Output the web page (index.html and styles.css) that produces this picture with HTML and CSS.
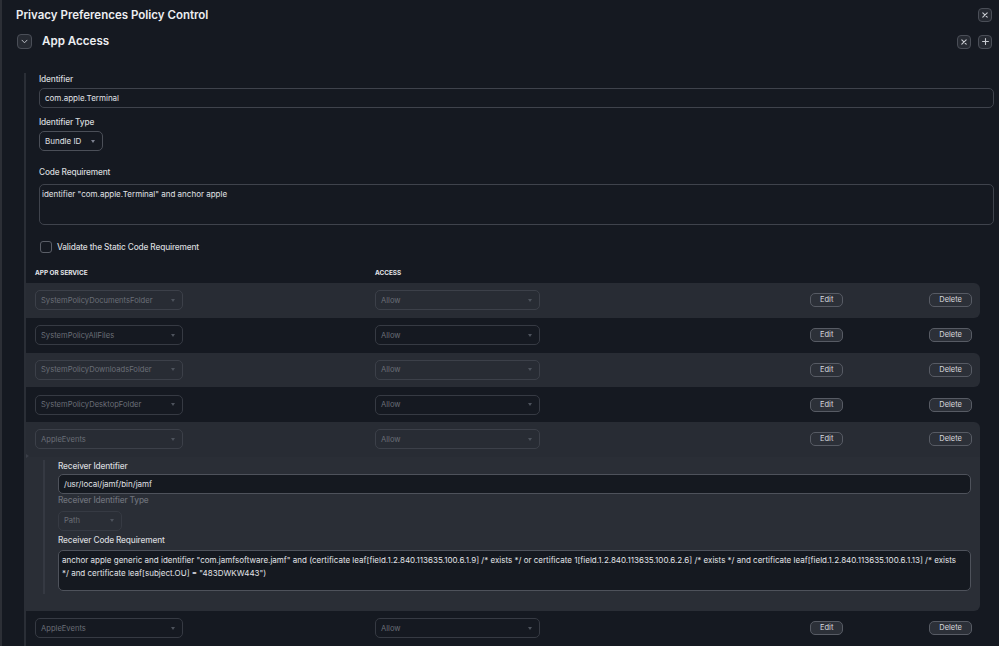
FILE: index.html
```html
<!DOCTYPE html>
<html lang="en">
<head>
<meta charset="utf-8">
<title>Privacy Preferences Policy Control</title>
<link rel="stylesheet" href="styles.css">
</head>
<body>
<header class="top">
  <h1 class="title">Privacy Preferences Policy Control</h1>
  <button class="icon-btn" aria-label="Close">
    <svg width="6" height="6" viewBox="0 0 6 6"><path d="M0.8 0.8L5.2 5.2M5.2 0.8L0.8 5.2" stroke="#c9ccd2" stroke-width="1.1" stroke-linecap="round"/></svg>
  </button>
</header>

<div class="section-head">
  <button class="icon-btn chev" aria-label="Collapse">
    <svg width="7" height="5" viewBox="0 0 7 5"><path d="M1 1.2L3.5 3.8L6 1.2" fill="none" stroke="#b9bcc3" stroke-width="1" stroke-linecap="round" stroke-linejoin="round"/></svg>
  </button>
  <h2 class="section-title">App Access</h2>
  <div class="actions">
    <button class="icon-btn" aria-label="Remove">
      <svg width="6" height="6" viewBox="0 0 6 6"><path d="M0.8 0.8L5.2 5.2M5.2 0.8L0.8 5.2" stroke="#c9ccd2" stroke-width="1.1" stroke-linecap="round"/></svg>
    </button>
    <button class="icon-btn" aria-label="Add">
      <svg width="7" height="7" viewBox="0 0 7 7"><path d="M3.5 0.6V6.4M0.6 3.5H6.4" stroke="#c9ccd2" stroke-width="1.1" stroke-linecap="round"/></svg>
    </button>
  </div>
</div>

<div class="group">
  <div class="field">
    <div class="label">Identifier</div>
    <div class="input">com.apple.Terminal</div>
  </div>
  <div class="field">
    <div class="label">Identifier Type</div>
    <div class="select select-sm"><span>Bundle ID</span><i class="caret"></i></div>
  </div>
  <div class="field field-code">
    <div class="label">Code Requirement</div>
    <div class="textarea">identifier "com.apple.Terminal" and anchor apple</div>
  </div>
  <label class="check"><span class="box"></span><span>Validate the Static Code Requirement</span></label>

  <div class="table">
    <div class="thead"><span>APP OR SERVICE</span><span>ACCESS</span></div>

    <div class="row shade">
      <div class="select select-app dis"><span>SystemPolicyDocumentsFolder</span><i class="caret"></i></div>
      <div class="select select-acc dis"><span>Allow</span><i class="caret"></i></div>
      <button class="btn">Edit</button>
      <button class="btn">Delete</button>
    </div>
    <div class="row">
      <div class="select select-app dis"><span>SystemPolicyAllFiles</span><i class="caret"></i></div>
      <div class="select select-acc dis"><span>Allow</span><i class="caret"></i></div>
      <button class="btn">Edit</button>
      <button class="btn">Delete</button>
    </div>
    <div class="row shade">
      <div class="select select-app dis"><span>SystemPolicyDownloadsFolder</span><i class="caret"></i></div>
      <div class="select select-acc dis"><span>Allow</span><i class="caret"></i></div>
      <button class="btn">Edit</button>
      <button class="btn">Delete</button>
    </div>
    <div class="row">
      <div class="select select-app dis"><span>SystemPolicyDesktopFolder</span><i class="caret"></i></div>
      <div class="select select-acc dis"><span>Allow</span><i class="caret"></i></div>
      <button class="btn">Edit</button>
      <button class="btn">Delete</button>
    </div>
    <div class="row shade open">
      <div class="select select-app dis"><span>AppleEvents</span><i class="caret"></i></div>
      <div class="select select-acc dis"><span>Allow</span><i class="caret"></i></div>
      <button class="btn">Edit</button>
      <button class="btn">Delete</button>
    </div>
    <div class="detail">
      <div class="detail-body">
        <div class="label">Receiver Identifier</div>
        <div class="input input-dark">/usr/local/jamf/bin/jamf</div>
        <div class="label muted">Receiver Identifier Type</div>
        <div class="select select-sm dis"><span>Path</span><i class="caret"></i></div>
        <div class="label">Receiver Code Requirement</div>
        <div class="textarea textarea-dark textarea-nowrap">anchor apple generic and identifier "com.jamfsoftware.jamf" and (certificate leaf[field.1.2.840.113635.100.6.1.9] /* exists */ or certificate 1[field.1.2.840.113635.100.6.2.6] /* exists */ and certificate leaf[field.1.2.840.113635.100.6.1.13] /* exists<br>*/ and certificate leaf[subject.OU] = "483DWKW443")</div>
      </div>
    </div>
    <div class="row">
      <div class="select select-app dis"><span>AppleEvents</span><i class="caret"></i></div>
      <div class="select select-acc dis"><span>Allow</span><i class="caret"></i></div>
      <button class="btn">Edit</button>
      <button class="btn">Delete</button>
    </div>
  </div>
</div>
</body>
</html>
```

FILE: styles.css
```css
* {
  box-sizing: border-box;
  margin: 0;
  padding: 0;
}

html {
  background: #151921;
}

body {
  height: 646px;
  overflow: hidden;
  background: #151921;
  border-left: 2px solid #2c2f36;
  font-family: Inter, "Noto Sans", sans-serif;
  color: #d6d8dc;
}

button {
  font-family: inherit;
  cursor: pointer;
}

/* header */
.top {
  display: flex;
  align-items: center;
  justify-content: space-between;
  padding: 8px 7px 0 14px;
}

.title {
  font-size: 11.5px;
  line-height: 14px;
  font-weight: 600;
  color: #eceef1;
}

.icon-btn {
  width: 14px;
  height: 14px;
  border: 1px solid #4a4e57;
  border-radius: 4px;
  background: #262a32;
  display: flex;
  align-items: center;
  justify-content: center;
}

.section-head {
  display: flex;
  align-items: center;
  margin-top: 12px;
  padding: 0 7px 0 15px;
  height: 15px;
}

.chev {
  width: 15px;
  height: 15px;
}

.section-title {
  flex: 1;
  margin-left: 10px;
  font-size: 11.6px;
  line-height: 15px;
  font-weight: 600;
  color: #eceef1;
}

.actions {
  display: flex;
  gap: 7px;
}

/* group */
.group {
  margin: 24px 0 0 22px;
  border-left: 2px solid #2a2e36;
  padding: 0 5px 0 13px;
}

.label {
  font-size: 8.3px;
  font-weight: 500;
  letter-spacing: -0.15px;
  line-height: 12px;
  color: #d6d8dc;
  margin-bottom: 3px;
}

.label.muted {
  color: #6d717a;
}

.field {
  margin-bottom: 8px;
}

.field-code {
  margin-top: 15px;
}

.field-code .label {
  margin-bottom: 6px;
}

.input {
  height: 20px;
  border: 1px solid #3f434c;
  border-radius: 5px;
  padding: 0 5px;
  font-size: 8px;
  line-height: 18px;
  color: #e0e2e6;
}

.select {
  height: 20px;
  border: 1px solid #4b4f58;
  border-radius: 5px;
  padding: 0 7px 0 5px;
  display: flex;
  align-items: center;
  justify-content: space-between;
  font-size: 8px;
  color: #e0e2e6;
}

.select-sm {
  width: 64px;
}

.caret {
  width: 0;
  height: 0;
  border-left: 2.5px solid transparent;
  border-right: 2.5px solid transparent;
  border-top: 3px solid #7d8290;
}

.select.dis {
  border-color: #363a43;
  color: #6a6e77;
  font-size: 7.6px;
}

.select.dis .caret {
  border-top-color: #4d525c;
}

.textarea {
  height: 41px;
  border: 1px solid #3f434c;
  border-radius: 5px;
  padding: 3px 1px 3px 2px;
  font-size: 8px;
  line-height: 13.5px;
  color: #e0e2e6;
}

.textarea-nowrap {
  white-space: nowrap;
  padding-left: 3px;
}

.check {
  display: flex;
  align-items: center;
  gap: 5px;
  margin: 16px 0 0 1px;
  font-size: 8.3px;
  font-weight: 500;
  letter-spacing: -0.15px;
  line-height: 12px;
  color: #d6d8dc;
}

.box {
  width: 12px;
  height: 12px;
  border: 1px solid #5a5e67;
  border-radius: 3px;
}

/* table */
.table {
  margin: 10px 14px 0 -13px;
}

.thead,
.row {
  display: grid;
  grid-template-columns: 340px 435px 1fr auto;
  align-items: center;
  padding: 0 8px 0 9px;
}

.thead {
  height: 20px;
  font-size: 6.4px;
  font-weight: 700;
  color: #e4e6ea;
}

.row {
  height: 34.75px;
}

.row.shade {
  background: #282c34;
  border-radius: 0 6px 6px 0;
}

.row.shade .select.dis {
  border-color: #3c4049;
}

.row.open {
  border-radius: 0 6px 0 0;
}

.select-app {
  width: 148px;
}

.select-acc {
  width: 165px;
}

.btn {
  justify-self: start;
  height: 14px;
  padding: 0 9px;
  border: 1px solid #575b64;
  border-radius: 5px;
  background: #2c3038;
  color: #d8dadf;
  font-size: 7.5px;
  line-height: 12px;
}

.row .btn:last-child {
  justify-self: end;
}

/* expanded detail */
.detail {
  position: relative;
  background: #2a2e36;
  padding: 3px 9px 17px 17px;
  border-radius: 0 0 6px 0;
}

.detail::before {
  content: "";
  position: absolute;
  left: 0;
  top: -3px;
  border-left: 3px solid #3b3f48;
  border-top: 2.5px solid transparent;
  border-bottom: 2.5px solid transparent;
}

.detail-body {
  border-left: 2px solid #353942;
  padding: 0 0 3px 13px;
}

.detail-body .label {
  margin-bottom: 2px;
}

.detail-body .label.muted {
  margin-bottom: 5px;
}

.detail-body .select {
  margin-bottom: 3px;
}

.detail-body .textarea {
  margin-top: 4px;
}

.input-dark,
.textarea-dark {
  background: #151920;
  border-color: #4e525b;
}

.textarea-dark {
  color: #e2e4e8;
}
```
